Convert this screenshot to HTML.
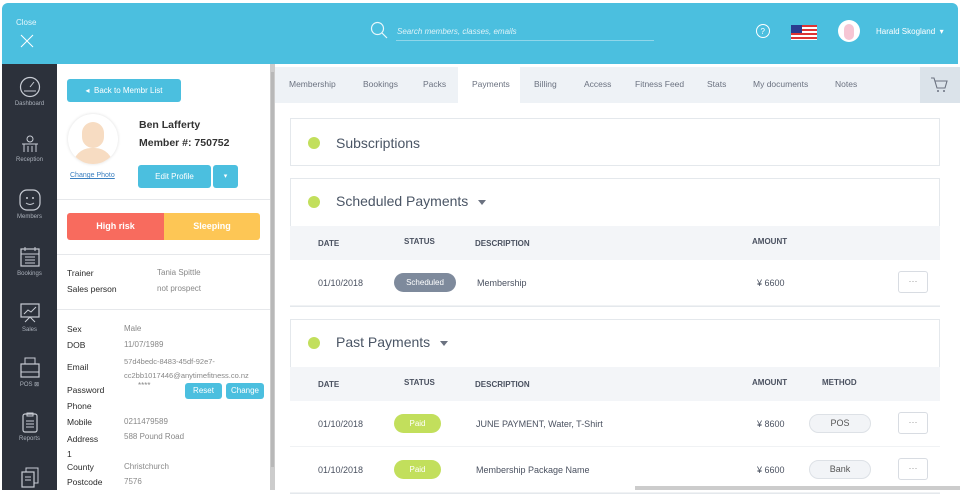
<!DOCTYPE html>
<html><head><style>
*{box-sizing:border-box;margin:0;padding:0}
body{width:960px;height:490px;overflow:hidden;background:#fff;font-family:"Liberation Sans",sans-serif;position:relative;color:#4a5160}
.abs{position:absolute}
#top{left:2px;top:3px;width:956px;height:61px;background:#4bbfdf;border-radius:6px 6px 0 0}
#side{left:2px;top:64px;width:55px;height:426px;background:#2c313b}
.si{position:absolute;left:0;width:55px;text-align:center;color:#aab0ba;font-size:6px}
.si svg{display:block;margin:0 auto 3px}
#lp{left:57px;top:64px;width:213px;height:426px;background:#fff}
#sb{left:270px;top:64px;width:5px;height:426px;background:#ccc}
.btn{position:absolute;background:#4bbfdf;color:#fff;border-radius:3px;font-size:8px;text-align:center}
.lbl{position:absolute;font-size:8.5px;color:#2a2a2a}
.val{position:absolute;font-size:8px;color:#888}
.hr{position:absolute;left:57px;width:213px;height:1px;background:#e6e8eb}
#tabs{left:275px;top:67px;width:685px;height:36px;background:#eef2f6}
.tab{position:absolute;top:12px;font-size:8.5px;color:#6b7280}
.card{position:absolute;left:290px;width:650px;border:1px solid #e4e8ec;background:#fff}
.dot{position:absolute;left:17px;width:12px;height:12px;border-radius:50%;background:#c2df5c}
.ct{position:absolute;left:45px;font-size:14px;color:#4a5565}
.th{position:absolute;left:290px;width:650px;height:34px;background:#f3f5f8}
.th span{position:absolute;top:13px;font-size:8px;font-weight:bold;color:#4a5160}
.row{position:absolute;left:290px;width:650px;height:46px;border-bottom:1px solid #f0f2f4;background:#fff}
.row span{position:absolute;top:18px;font-size:9px;color:#4a5160}
.pill{position:absolute;top:13px;height:19px;border-radius:10px;color:#fff;font-size:8px;text-align:center;line-height:19px}
.meth{position:absolute;left:519px;top:13px;width:62px;height:19px;border-radius:10px;background:#f2f4f7;border:1px solid #dde1e6;font-size:9px;color:#555;text-align:center;line-height:17px}
.more{position:absolute;left:608px;top:11px;width:30px;height:22px;border:1px solid #d8dce2;border-radius:3px;background:#fff;font-size:9px;color:#999;text-align:center;line-height:18px}
.caret{display:inline-block;width:0;height:0;border-left:4px solid transparent;border-right:4px solid transparent;border-top:5px solid #6b7280;margin-left:10px;vertical-align:middle}
</style></head><body>
<div id="top" class="abs">
 <div class="abs" style="left:14px;top:15px;color:#e6f6fb;font-size:8px">Close</div>
 <svg class="abs" style="left:18px;top:31px" width="14" height="14"><path d="M1 1L13 13M13 1L1 13" stroke="#fff" stroke-width="1"/></svg>
 <svg class="abs" style="left:368px;top:18px" width="18" height="18"><circle cx="7.5" cy="7.5" r="6" fill="none" stroke="#e8f7fb" stroke-width="1.2"/><line x1="12" y1="12" x2="17" y2="17" stroke="#e8f7fb" stroke-width="1.2"/></svg>
 <div class="abs" style="left:395px;top:24px;color:#dff3f9;font-size:8px;font-style:italic">Search members, classes, emails</div>
 <div class="abs" style="left:394px;top:37px;width:258px;height:1px;background:#8fd6ea"></div>
 <svg class="abs" style="left:753px;top:20px" width="16" height="18"><circle cx="8" cy="8" r="6.5" fill="none" stroke="#fff" stroke-width="1"/><text x="5.5" y="11" font-size="8" fill="#fff" font-family="Liberation Sans">?</text></svg>
 <svg class="abs" style="left:789px;top:22px" width="26" height="15"><rect width="26" height="15" fill="#fff"/><rect y="0" width="26" height="2" fill="#d33"/><rect y="4" width="26" height="2" fill="#d33"/><rect y="8" width="26" height="2" fill="#d33"/><rect y="12" width="26" height="2" fill="#d33"/><rect width="11" height="8" fill="#2a3b8f"/></svg>
 <div class="abs" style="left:836px;top:17px;width:22px;height:22px;border-radius:50%;background:#fff"><div style="margin:4px auto;width:10px;height:16px;border-radius:5px;background:#f6c6d4"></div></div>
 <div class="abs" style="left:874px;top:24px;color:#fff;font-size:8px">Harald Skogland &nbsp;▾</div>
</div>
<div id="side" class="abs">
 <div class="si" style="top:12px"><svg width="22" height="22"><circle cx="11" cy="11" r="9.5" fill="none" stroke="#c8ccd4" stroke-width="1.2"/><line x1="11" y1="11" x2="15" y2="6" stroke="#c8ccd4"/><path d="M5 15h12" stroke="#c8ccd4"/></svg>Dashboard</div>
 <div class="si" style="top:70px"><svg width="22" height="20"><circle cx="11" cy="5" r="3" fill="none" stroke="#c8ccd4"/><path d="M3 10h16M5 10v8M17 10v8M9 12v6M13 12v6" stroke="#c8ccd4"/></svg>Reception</div>
 <div class="si" style="top:125px"><svg width="22" height="22"><rect x="1" y="1" width="20" height="20" rx="7" fill="none" stroke="#c8ccd4" stroke-width="1.2"/><circle cx="8" cy="9" r="1" fill="#c8ccd4"/><circle cx="14" cy="9" r="1" fill="#c8ccd4"/><path d="M7 14q4 3 8 0" fill="none" stroke="#c8ccd4"/></svg>Members</div>
 <div class="si" style="top:182px"><svg width="22" height="22"><rect x="2" y="3" width="18" height="17" fill="none" stroke="#c8ccd4" stroke-width="1.2"/><path d="M2 8h18M6 1v4M16 1v4M6 11h10M6 14h10M6 17h10" stroke="#c8ccd4"/></svg>Bookings</div>
 <div class="si" style="top:238px"><svg width="22" height="22"><rect x="2" y="2" width="18" height="13" fill="none" stroke="#c8ccd4" stroke-width="1.2"/><path d="M5 12l4-4 3 2 5-5M6 20l5-5 5 5" fill="none" stroke="#c8ccd4"/></svg>Sales</div>
 <div class="si" style="top:292px"><svg width="22" height="22"><rect x="2" y="8" width="18" height="13" fill="none" stroke="#c8ccd4" stroke-width="1.2"/><rect x="6" y="2" width="10" height="6" fill="none" stroke="#c8ccd4"/><path d="M2 16h18" stroke="#c8ccd4"/></svg>POS ⊠</div>
 <div class="si" style="top:347px"><svg width="22" height="22"><rect x="4" y="3" width="14" height="18" rx="2" fill="none" stroke="#c8ccd4" stroke-width="1.2"/><path d="M8 2h6v3H8zM7 10h8M7 13h8M7 16h8" fill="none" stroke="#c8ccd4"/></svg>Reports</div>
 <div class="si" style="top:402px"><svg width="22" height="22"><rect x="3" y="6" width="12" height="15" fill="none" stroke="#c8ccd4" stroke-width="1.2"/><path d="M7 6V2h12v15h-4M6 11h6M6 14h6" fill="none" stroke="#c8ccd4"/></svg></div>
</div>
<div id="lp" class="abs"></div>
<div class="btn" style="left:67px;top:79px;width:114px;height:23px;line-height:23px">◂ &nbsp;Back to Membr List</div>
<div class="abs" style="left:68px;top:114px;width:50px;height:50px;border-radius:50%;background:#fff;box-shadow:0 0 3px #ddd;overflow:hidden"><div style="margin:8px auto 0;width:22px;height:26px;border-radius:11px;background:#f7dcc2"></div><div style="margin:0 auto;width:40px;height:20px;border-radius:18px 18px 0 0;background:#f7dcc2"></div></div>
<div class="abs" style="left:70px;top:172px;font-size:7px;color:#3a7fc0;text-decoration:underline">Change Photo</div>
<div class="abs" style="left:139px;top:116px;font-size:10.5px;color:#333;line-height:18px;font-weight:bold">Ben Lafferty<br>Member #: 750752</div>
<div class="btn" style="left:138px;top:165px;width:73px;height:23px;line-height:23px">Edit Profile</div>
<div class="btn" style="left:213px;top:165px;width:25px;height:23px;line-height:23px;font-size:7px">▾</div>
<div class="hr" style="top:199px"></div>
<div class="abs" style="left:67px;top:213px;width:97px;height:27px;background:#f86b5e;color:#fff;font-size:9px;font-weight:bold;text-align:center;line-height:27px;border-radius:3px 0 0 3px">High risk</div>
<div class="abs" style="left:164px;top:213px;width:96px;height:27px;background:#fdc655;color:#fff;font-size:9px;font-weight:bold;text-align:center;line-height:27px;border-radius:0 3px 3px 0">Sleeping</div>
<div class="hr" style="top:254px"></div>
<div class="lbl" style="left:67px;top:268px">Trainer</div><div class="val" style="left:157px;top:268px">Tania Spittle</div>
<div class="lbl" style="left:67px;top:284px">Sales person</div><div class="val" style="left:157px;top:284px">not prospect</div>
<div class="hr" style="top:309px"></div>
<div class="lbl" style="left:67px;top:324px">Sex</div><div class="val" style="left:124px;top:324px">Male</div>
<div class="lbl" style="left:67px;top:340px">DOB</div><div class="val" style="left:124px;top:340px">11/07/1989</div>
<div class="lbl" style="left:67px;top:362px">Email</div><div class="val" style="left:124px;top:355px;line-height:14px;font-size:7.5px">57d4bedc-8483-45df-92e7-<br>cc2bb1017446@anytimefitness.co.nz</div>
<div class="lbl" style="left:67px;top:385px">Password</div><div class="val" style="left:138px;top:381px">****</div>
<div class="btn" style="left:185px;top:383px;width:37px;height:16px;line-height:16px">Reset</div>
<div class="btn" style="left:226px;top:383px;width:38px;height:16px;line-height:16px">Change</div>
<div class="lbl" style="left:67px;top:401px">Phone</div>
<div class="lbl" style="left:67px;top:417px">Mobile</div><div class="val" style="left:124px;top:417px">0211479589</div>
<div class="lbl" style="left:67px;top:432px;line-height:15px">Address<br>1</div><div class="val" style="left:124px;top:432px">588 Pound Road</div>
<div class="lbl" style="left:67px;top:462px">County</div><div class="val" style="left:124px;top:462px">Christchurch</div>
<div class="lbl" style="left:67px;top:477px">Postcode</div><div class="val" style="left:124px;top:477px">7576</div>
<div id="sb" class="abs"><div style="margin:8px 0 0 1px;width:3px;height:395px;background:#b8b8b8"></div></div>

<div id="tabs" class="abs">
 <div class="tab" style="left:14px">Membership</div>
 <div class="tab" style="left:88px">Bookings</div>
 <div class="tab" style="left:148px">Packs</div>
 <div class="abs" style="left:183px;top:0;width:62px;height:36px;background:#fff"></div>
 <div class="tab" style="left:197px">Payments</div>
 <div class="tab" style="left:259px">Billing</div>
 <div class="tab" style="left:309px">Access</div>
 <div class="tab" style="left:360px">Fitness Feed</div>
 <div class="tab" style="left:432px">Stats</div>
 <div class="tab" style="left:478px">My documents</div>
 <div class="tab" style="left:560px">Notes</div>
 <div class="abs" style="left:645px;top:0;width:40px;height:36px;background:#dbe3ea"></div>
 <svg class="abs" style="left:655px;top:9px" width="18" height="18"><path d="M1 2h3l3 10h8l2-7H5" fill="none" stroke="#6b7280" stroke-width="1.1"/><circle cx="8" cy="15" r="1" fill="#6b7280"/><circle cx="14" cy="15" r="1" fill="#6b7280"/></svg>
</div>

<div class="card" style="top:118px;height:48px"><div class="dot" style="top:18px"></div><div class="ct" style="top:16px">Subscriptions</div></div>

<div class="card" style="top:178px;height:129px"><div class="dot" style="top:17px"></div><div class="ct" style="top:14px">Scheduled Payments<span class="caret"></span></div></div>
<div class="th" style="top:226px"><span style="left:28px">DATE</span><span style="left:114px;top:11px">STATUS</span><span style="left:185px">DESCRIPTION</span><span style="left:462px;top:11px">AMOUNT</span></div>
<div class="row" style="top:260px"><span style="left:28px">01/10/2018</span><div class="pill" style="left:104px;width:62px;background:#7e8a9c">Scheduled</div><span style="left:187px">Membership</span><span style="left:467px">¥ 6600</span><div class="more">···</div></div>

<div class="card" style="top:319px;height:175px"><div class="dot" style="top:17px"></div><div class="ct" style="top:14px">Past Payments<span class="caret"></span></div></div>
<div class="th" style="top:367px"><span style="left:28px">DATE</span><span style="left:114px;top:11px">STATUS</span><span style="left:185px">DESCRIPTION</span><span style="left:462px;top:11px">AMOUNT</span><span style="left:532px;top:11px">METHOD</span></div>
<div class="row" style="top:401px"><span style="left:28px">01/10/2018</span><div class="pill" style="left:104px;width:47px;background:#c2df5c">Paid</div><span style="left:186px">JUNE PAYMENT, Water, T-Shirt</span><span style="left:467px">¥ 8600</span><div class="meth">POS</div><div class="more">···</div></div>
<div class="row" style="top:447px"><span style="left:28px">01/10/2018</span><div class="pill" style="left:104px;width:47px;background:#c2df5c">Paid</div><span style="left:186px">Membership Package Name</span><span style="left:467px">¥ 6600</span><div class="meth">Bank</div><div class="more">···</div></div>
<div class="abs" style="left:635px;top:486px;width:325px;height:4px;background:#ccc"></div>
</body></html>
